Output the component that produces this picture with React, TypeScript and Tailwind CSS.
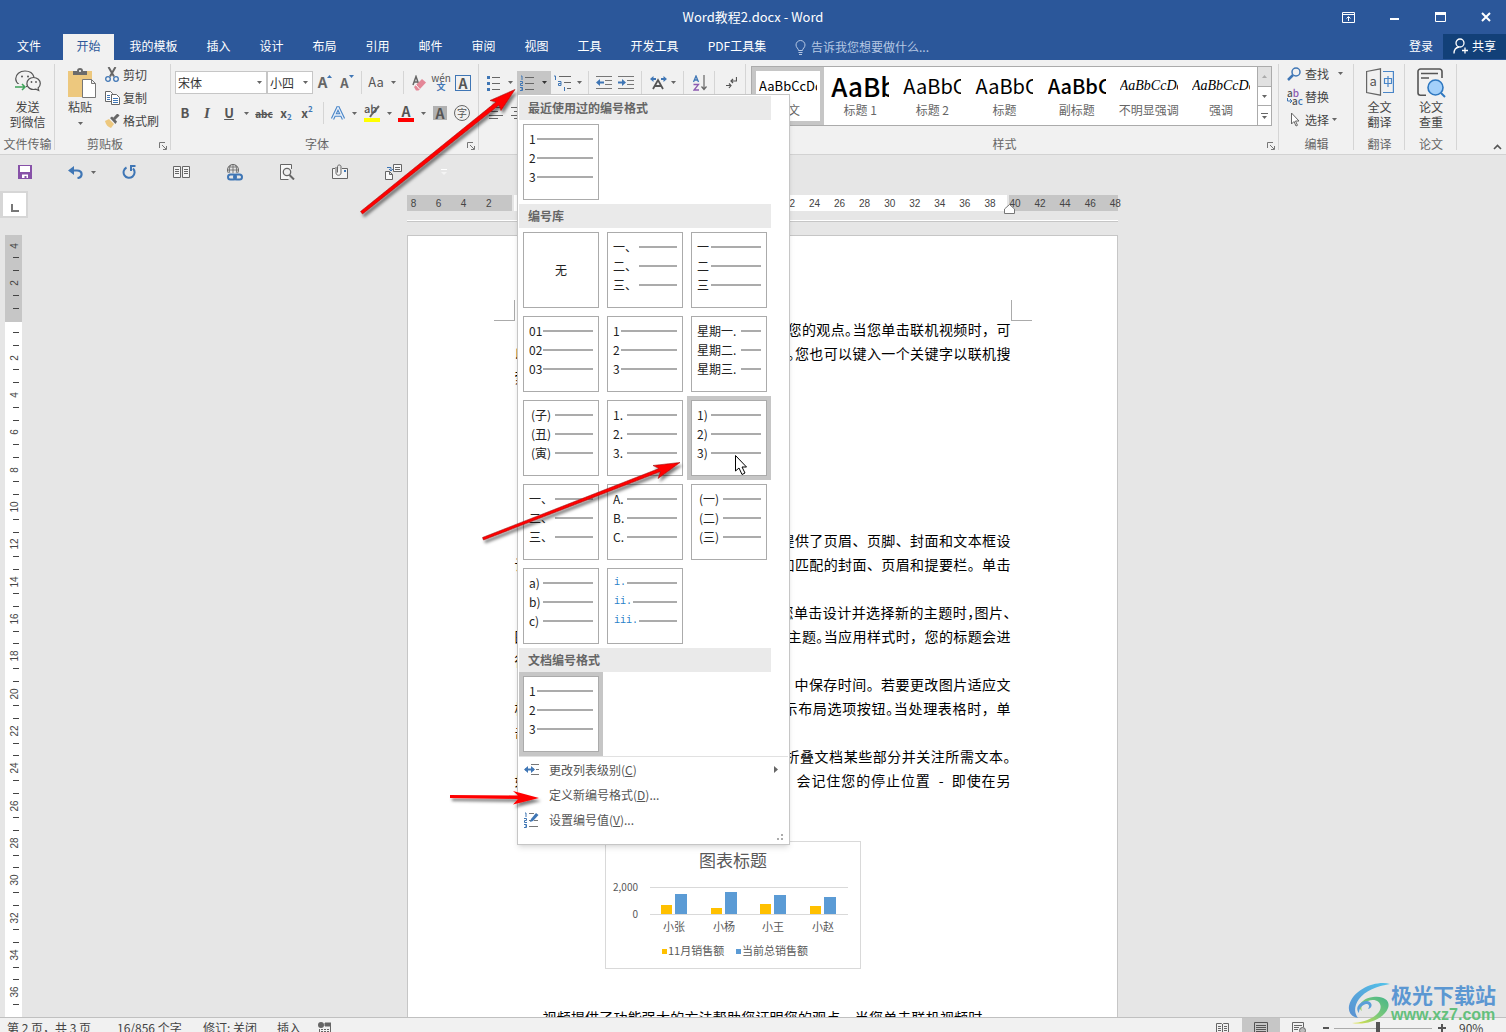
import React, { ReactNode } from 'react';

function Svg({ w, h, children, cls = '' }: { w: number; h: number; children: ReactNode; cls?: string }) {
  return (
    <svg width={w} height={h} viewBox={`0 0 ${w} ${h}`} fill="none" className={'shrink-0 ' + cls} aria-hidden="true">
      {children}
    </svg>
  );
}

function Caret({ color = '#666' }: { color?: string }) {
  return (
    <Svg w={5} h={3}>
      <path d="M0 0h5L2.5 3z" fill={color} />
    </Svg>
  );
}

function Cell({ w, label, children }: { w: string; label: string; children: ReactNode }) {
  return (
    <button aria-label={label} className={'flex h-full shrink-0 items-center justify-center ' + w}>
      {children}
    </button>
  );
}

function Sep({ w }: { w: string }) {
  return (
    <div className={'flex h-full shrink-0 justify-center ' + w}>
      <div className="h-full w-px bg-[#d5d5d5]" />
    </div>
  );
}

function Launcher() {
  return (
    <button aria-label="对话框" className="absolute right-1 bottom-1">
      <Svg w={8} h={8}>
        <path d="M.5 6V.5H6M3 3l4 4M7.5 4v3.500H4" stroke="#777" />
      </Svg>
    </button>
  );
}

function Group({ w, label, launcher, children }: { w: string; label: string; launcher?: boolean; children: ReactNode }) {
  return (
    <section className={'relative flex flex-col ' + w}>
      <div className="h-[74px]">{children}</div>
      <div className={'flex h-[19px] items-center justify-center text-xs whitespace-nowrap text-[#666] ' + (launcher ? 'pr-4' : '')}>{label}</div>
      {launcher && <Launcher />}
      <div className="absolute top-1 right-0 h-[86px] w-px bg-[#d5d5d5]" />
    </section>
  );
}

const tabs: { name: string; w: string }[] = [
  { name: '我的模板', w: 'w-[77px]' },
  { name: '插入', w: 'w-[53px]' },
  { name: '设计', w: 'w-[53px]' },
  { name: '布局', w: 'w-[53px]' },
  { name: '引用', w: 'w-[53px]' },
  { name: '邮件', w: 'w-[53px]' },
  { name: '审阅', w: 'w-[53px]' },
  { name: '视图', w: 'w-[53px]' },
  { name: '工具', w: 'w-[53px]' },
  { name: '开发工具', w: 'w-[77px]' },
  { name: 'PDF工具集', w: 'w-[88px]' },
];

function TitleBar() {
  return (
    <header className="bg-[#2b579a] text-white">
      <div className="relative flex h-[34px] items-center justify-end">
        <h1 className="absolute inset-x-0 text-center text-[13px] leading-[34px]">Word教程2.docx - Word</h1>
        <button aria-label="功能区显示选项" className="z-10 flex h-8 w-[46px] items-center justify-center">
          <Svg w={13} h={11}>
            <path d="M.5.5h12v10H.5zM.5 2.500h12M6.500 9V5M4.500 6.500l2-2 2 2" stroke="#fff" />
          </Svg>
        </button>
        <button aria-label="最小化" className="z-10 flex h-8 w-[46px] items-center justify-center">
          <Svg w={9} h={6}>
            <path d="M0 4h9v2H0z" fill="#fff" />
          </Svg>
        </button>
        <button aria-label="最大化" className="z-10 flex h-8 w-[46px] items-center justify-center">
          <Svg w={11} h={10}>
            <path d="M.5.500h10v9H.5z" stroke="#fff" />
            <path d="M0 0h11v3H0z" fill="#fff" />
          </Svg>
        </button>
        <button aria-label="关闭" className="z-10 mr-[-3px] flex h-8 w-[46px] items-center justify-center">
          <Svg w={10} h={10}>
            <path d="M1 1l8 8M9 1L1 9" stroke="#fff" strokeWidth="2" />
          </Svg>
        </button>
      </div>
      <div className="flex h-[26px] items-stretch text-xs">
        <nav className="flex whitespace-nowrap">
          <button className="w-[58px] pb-[2px]">文件</button>
          <button className="mr-px ml-[5px] w-[51px] bg-[#f1f1f1] pb-[2px] text-[#2b579a]">开始</button>
          {tabs.map((t) => (
            <button key={t.name} className={'pb-[2px] ' + t.w}>
              {t.name}
            </button>
          ))}
        </nav>
        <label className="ml-[14px] flex flex-1 items-center gap-[5px]">
          <Svg w={11} h={15}>
            <path d="M3.500 10.500c0-2-2.500-2.800-2.500-5.500a4.500 4.500 0 019 0c0 2.700-2.500 3.500-2.500 5.500zM3.500 12.500h4M4 14.500h3" stroke="#b5c7e3" />
          </Svg>
          <input aria-label="告诉我您想要做什么" placeholder="告诉我您想要做什么..." className="w-[160px] bg-transparent outline-none placeholder:text-[#b5c7e3]" />
        </label>
        <button className="w-[44px] pb-[2px] whitespace-nowrap">登录</button>
        <button className="mb-px flex w-[63px] items-center justify-center gap-1 bg-[#124078] pb-[2px] whitespace-nowrap">
          <Svg w={15} h={16}>
            <circle cx="7" cy="5" r="4" stroke="#fff" strokeWidth="1.300" />
            <path d="M1 15.500c0-3.500 2-6 5-6.500M9 12.500h6M12 9.500v6" stroke="#fff" strokeWidth="1.300" />
          </Svg>
          共享
        </button>
      </div>
    </header>
  );
}

type Row = [string, string];
const W56 = 'w-[56px]';
const W50 = 'w-[50px]';
const W44 = 'w-[44px]';
const W38 = 'w-[38px]';
const W20 = 'w-[20px]';
const plain: Row[] = [['1', W56], ['2', W56], ['3', W56]];
const library: { rows: Row[]; active?: boolean }[] = [
  { rows: [] },
  { rows: [['一、', W38], ['二、', W38], ['三、', W38]] },
  { rows: [['一', W50], ['二', W50], ['三', W50]] },
  { rows: [['01', W50], ['02', W50], ['03', W50]] },
  { rows: plain },
  { rows: [['星期一.', W20], ['星期二.', W20], ['星期三.', W20]] },
  { rows: [['(子)', W38], ['(丑)', W38], ['(寅)', W38]] },
  { rows: [['1.', W50], ['2.', W50], ['3.', W50]] },
  { rows: [['1)', W50], ['2)', W50], ['3)', W50]], active: true },
  { rows: [['一、', W38], ['二、', W38], ['三、', W38]] },
  { rows: [['A.', W50], ['B.', W50], ['C.', W50]] },
  { rows: [['(一)', W38], ['(二)', W38], ['(三)', W38]] },
  { rows: [['a)', W50], ['b)', W50], ['c)', W50]] },
  { rows: [['i.', W50], ['ii.', W44], ['iii.', W38]] },
];

function NumberBox({ rows, active }: { rows: Row[]; active?: boolean }) {
  return (
    <button className={'h-[84px] w-[84px] p-1 ' + (active ? 'bg-[#c6c6c6]' : '')}>
      <span className="flex h-full flex-col border border-[#ababab] bg-white px-[5px] pt-1 text-xs text-[#222]">
        {rows.length === 0 && <span className="m-auto pb-1">无</span>}
        {rows.map(([t, w]) => (
          <span key={t} className="flex h-[19px] items-center justify-between whitespace-nowrap">
            <span className={t[0] === 'i' ? "pl-px font-['Liberation_Mono'] text-[10px] text-[#2a7fc9]" : t[0] === '(' ? 'pl-[2px]' : ''}>{t}</span>
            <span className={'h-[2px] shrink-0 bg-[#ababab] ' + w} />
          </span>
        ))}
      </span>
    </button>
  );
}

function MenuHead({ children }: { children: ReactNode }) {
  return <h2 className="h-6 w-[252px] bg-[#eaeaea] pl-[9px] text-xs leading-6 font-bold text-[#666]">{children}</h2>;
}

function NumberingMenu() {
  return (
    <div className="absolute top-full left-0 z-20 w-[273px] border border-[#c6c6c6] bg-white p-px text-[#555] shadow-md">
      <MenuHead>最近使用过的编号格式</MenuHead>
      <div className="flex">
        <NumberBox rows={plain} />
      </div>
      <MenuHead>编号库</MenuHead>
      <div className="grid w-[252px] grid-cols-3">
        {library.map((b, i) => (
          <NumberBox key={i} {...b} />
        ))}
      </div>
      <MenuHead>文档编号格式</MenuHead>
      <div className="flex">
        <NumberBox rows={plain} active />
      </div>
      <div className="border-t border-[#e1e1e1] text-xs">
        <button className="flex h-[25px] w-full items-center gap-[10px] pr-[10px] pl-[5px]">
          <Svg w={15} h={11}>
            <path d="M1 5.500h9" stroke="#3f76b5" strokeWidth="2" />
            <path d="M0 5.500L4 2v7zM11 5.500L7 2v7z" fill="#3f76b5" />
            <path d="M7 .5h8M12 5.500h3M7 10.500h8" stroke="#777" />
          </Svg>
          <span className="flex-1 text-left">更改列表级别(<u>C</u>)</span>
          <Svg w={4} h={7}>
            <path d="M0 0l4 3.500L0 7z" fill="#666" />
          </Svg>
        </button>
        <button className="flex h-[25px] w-full items-center pl-[30px]">
          <span>定义新编号格式(<u>D</u>)...</span>
        </button>
        <button className="flex h-[25px] w-full items-center gap-[10px] pl-[5px]">
          <Svg w={15} h={16}>
            <path d="M1 1h1v4M0 6.500h2.500v2H.5v2h2.500M0 12.500h2.500v3H0M1 14h1.500" stroke="#3f76b5" />
            <path d="M5 1.500h5M5 8.500h2M10 8.500h4M5 14.500h9" stroke="#777" />
            <path d="M6 10l1-3 5-6 2.500 2-5.500 6z" fill="#3f76b5" />
          </Svg>
          <span>设置编号值(<u>V</u>)...</span>
        </button>
      </div>
      <div className="flex h-[11px] items-end justify-end pr-[3px] pb-[2px]">
        <Svg w={8} h={7}>
          <path d="M4 0h2v2H4zM4 4h2v2H4zM0 4h2v2H0z" fill="#ababab" />
        </Svg>
      </div>
    </div>
  );
}

function ClipboardGroup() {
  return (
    <Group w="w-[116px]" label="剪贴板" launcher>
      <div className="flex h-full pt-[3px] pl-[11px] text-xs text-[#444]">
        <button className="flex w-8 flex-col items-center pt-[5px] whitespace-nowrap">
          <Svg w={28} h={30}>
            <path d="M0 3h24v26H0z" fill="#edc87e" />
            <path d="M5 7V3h4c0-2 1-3 3-3s3 1 3 3h4v4z" fill="#6b6b6b" />
            <circle cx="12" cy="3" r="1" fill="#fff" />
            <path d="M14.500 11.500h9l4 4v14h-13zM23.500 11.500v4h4" fill="#fff" stroke="#777" />
          </Svg>
          <span className="pr-1 leading-[18px]">粘贴</span>
          <span className="mt-[6px] pr-1">
            <Caret />
          </span>
        </button>
        <div className="flex flex-col pl-[7px]">
          <button className="flex h-[23px] items-center gap-1 whitespace-nowrap">
            <Svg w={14} h={15}>
              <path d="M3.500 0L9 9.500M10.500 0L5 9.500" stroke="#666" strokeWidth="2" />
              <circle cx="3" cy="12" r="2.300" stroke="#3f76b5" strokeWidth="1.300" />
              <circle cx="11" cy="12" r="2.300" stroke="#3f76b5" strokeWidth="1.300" />
            </Svg>
            剪切
          </button>
          <button className="flex h-[23px] items-center gap-[3px] whitespace-nowrap">
            <Svg w={15} h={14}>
              <path d="M.5.500h5l2 2v8h-7z" fill="#fff" stroke="#666" />
              <path d="M6.500 3.500h5l3 3v7h-8z" fill="#fff" stroke="#666" />
              <path d="M2 4.500h3M2 6.500h3M2 8.500h3M8 7.500h5M8 9.500h5M8 11.500h5" stroke="#3f76b5" />
            </Svg>
            复制
          </button>
          <button className="flex h-[23px] items-center gap-[3px] whitespace-nowrap">
            <Svg w={15} h={14}>
              <path d="M0 7l4-2 5 5-3 4c-3-1-5-3-6-7z" fill="#edc87e" />
              <path d="M5 4l2-1.500 5 5L10.500 10z" fill="#666" />
              <path d="M9 5l4.500-4.500" stroke="#666" strokeWidth="3" />
            </Svg>
            格式刷
          </button>
        </div>
      </div>
    </Group>
  );
}

function Combo({ w, value, label }: { w: string; value: string; label: string }) {
  return (
    <div className={'relative h-full shrink-0 ' + w}>
      <select aria-label={label} className="block h-full w-full appearance-none border border-[#c6c6c6] bg-white pl-[2px] text-xs text-[#333]">
        <option>{value}</option>
      </select>
      <span className="pointer-events-none absolute inset-y-0 right-[5px] flex items-center">
        <Caret />
      </span>
    </div>
  );
}

function FontGroup() {
  return (
    <Group w="w-[308px]" label="字体" launcher>
      <div className="flex flex-col gap-2 pt-[11px] text-[#555]">
        <div className="flex h-[23px] pl-1">
          <Combo w="w-[92px]" value="宋体" label="字体" />
          <Combo w="w-[46px]" value="小四" label="字号" />
          <Cell w="w-6" label="增大字号">
            <span className="text-[15px] font-bold text-[#666]">A</span>
            <Svg w={5} h={3} cls="mb-[12px]"><path d="M0 3h5L2.500 0z" fill="#3f76b5" /></Svg>
          </Cell>
          <Cell w="w-5" label="减小字号">
            <span className="pt-px text-[13px] font-bold text-[#666]">A</span>
            <Svg w={5} h={3} cls="mb-[12px]"><path d="M0 0h5L2.500 3z" fill="#3f76b5" /></Svg>
          </Cell>
          <Sep w="w-2" />
          <Cell w="w-[22px]" label="更改大小写"><span className="pb-[2px] text-[13px]">Aa</span></Cell>
          <Cell w="w-3" label="更改大小写选项"><Caret /></Cell>
          <Sep w="w-2" />
          <Cell w="w-6" label="清除格式">
            <Svg w={15} h={16}>
              <path d="M1 10L4 1.500 7 10M2 7h4" stroke="#666" strokeWidth="1.500" />
              <path d="M2 12l8-8 4 3.500-7.500 8H4z" fill="#e48797" />
              <path d="M4 10l3.500 4" stroke="#fff" />
            </Svg>
          </Cell>
          <Cell w="w-5" label="拼音指南">
            <span className="flex flex-col items-center">
              <span className="text-[10px] leading-[9px]">wén</span>
              <span className="text-[9px] leading-[10px] font-bold text-[#3f76b5]">文</span>
            </span>
          </Cell>
          <Cell w="w-6" label="字符边框">
            <span className="h-4 w-4 border border-[#3f76b5] text-center text-sm leading-[14px] font-bold">A</span>
          </Cell>
        </div>
        <div className="flex h-[22px] pl-[3px]">
          <Cell w="w-[22px]" label="加粗"><b className="text-[13px]">B</b></Cell>
          <Cell w="w-[22px]" label="倾斜"><i className="font-['Liberation_Serif'] text-[15px] font-bold">I</i></Cell>
          <Cell w="w-[22px]" label="下划线"><b className="text-[13px] underline">U</b></Cell>
          <Cell w="w-3" label="下划线选项"><Caret /></Cell>
          <Cell w="w-6" label="删除线"><s className="text-[10px] font-bold">abc</s></Cell>
          <Cell w="w-5" label="下标"><b className="text-xs">x</b><span className="pt-2 text-[8px] font-bold text-[#3f76b5]">2</span></Cell>
          <Cell w="w-[22px]" label="上标"><b className="text-xs">x</b><span className="pb-2 text-[8px] font-bold text-[#3f76b5]">2</span></Cell>
          <Sep w="w-[10px]" />
          <Cell w="w-5" label="文本效果">
            <Svg w={14} h={14}>
              <path d="M1.500 13L7 1.500 12.500 13M3.500 9h7" stroke="#4a86c8" strokeWidth="3.500" />
              <path d="M1.500 13L7 1.500 12.500 13M3.500 9h7" stroke="#e8f0fa" strokeWidth="1.300" />
            </Svg>
          </Cell>
          <Cell w="w-3" label="文本效果选项"><Caret /></Cell>
          <Cell w="w-6" label="突出显示">
            <span className="relative flex h-[17px] w-4 flex-col justify-end">
              <span className="absolute -top-1 left-0 text-[11px] leading-[15px] font-medium">ab</span>
              <Svg w={16} h={17}>
                <path d="M15 1L8 9l-2 3" stroke="#666" strokeWidth="2" />
                <path d="M0 13h16v4H0z" fill="#ff0" />
              </Svg>
            </span>
          </Cell>
          <Cell w="w-[10px]" label="突出显示选项"><Caret /></Cell>
          <Cell w="w-6" label="字体颜色">
            <span className="flex w-4 flex-col items-center">
              <b className="text-sm leading-[13px]">A</b>
              <span className="h-1 w-4 bg-[#f00]" />
            </span>
          </Cell>
          <Cell w="w-[10px]" label="字体颜色选项"><Caret /></Cell>
          <Cell w="w-6" label="字符底纹"><b className="h-[14px] w-[14px] bg-[#b1b1b1] text-sm leading-[14px]">A</b></Cell>
          <Cell w="w-5" label="带圈字符"><span className="h-4 w-4 rounded-full border border-[#666] text-[10px] leading-[14px]">字</span></Cell>
        </div>
      </div>
    </Group>
  );
}

function ParagraphGroup() {
  return (
    <Group w="w-[267px]" label="段落">
      <div className="flex flex-col gap-2 pt-[11px]">
        <div className="flex h-[23px] pl-[5px]">
          <Cell w="w-5" label="项目符号">
            <Svg w={14} h={16}>
              <path d="M0 1h3v3H0zM0 7h3v3H0zM0 13h3v3H0z" fill="#3f76b5" />
              <path d="M5 2.500h8M5 8.500h8M5 14.500h8" stroke="#666" />
            </Svg>
          </Cell>
          <Cell w="w-[13px]" label="项目符号选项"><Caret /></Cell>
          <div className="relative flex h-full w-[34px] shrink-0 bg-[#c6c6c6]">
            <Cell w="w-[21px]" label="编号">
              <Svg w={15} h={16}>
                <path d="M1 1h1v4M0 6.500h2.500v2H.5v2h2.500M0 12.500h2.500v3H0M1 14h1.500" stroke="#3f76b5" />
                <path d="M5 2.500h9M5 8.500h9M5 14.500h9" stroke="#666" />
              </Svg>
            </Cell>
            <Cell w="w-[13px]" label="编号选项"><Caret color="#333" /></Cell>
            <NumberingMenu />
          </div>
          <Cell w="w-[22px]" label="多级列表">
            <Svg w={17} h={16}>
              <path d="M0 1h1.500v4M4 6.500h3v4H4.500v-2H7M10.500 12v4" stroke="#3f76b5" />
              <path d="M5 1.500h12M10 7.500h7M13 13.500h4" stroke="#666" />
            </Svg>
          </Cell>
          <Cell w="w-3" label="多级列表选项"><Caret /></Cell>
          <Sep w="w-[7px]" />
          <Cell w="w-6" label="减少缩进量">
            <Svg w={16} h={15}>
              <path d="M0 1.500h16M9 5.500h7M9 9.500h7M0 13.500h16" stroke="#777" />
              <path d="M0 7.500L4 4v2.500h4v2H4V11z" fill="#3f76b5" />
            </Svg>
          </Cell>
          <Cell w="w-5" label="增加缩进量">
            <Svg w={16} h={15}>
              <path d="M0 1.500h16M9 5.500h7M9 9.500h7M0 13.500h16" stroke="#777" />
              <path d="M8 7.500L4 4v2.500H0v2h4V11z" fill="#3f76b5" />
            </Svg>
          </Cell>
          <Sep w="w-[10px]" />
          <Cell w="w-6" label="中文版式">
            <Svg w={17} h={14}>
              <path d="M3 13l5-9 5 9M5 10h6.500" stroke="#555" strokeWidth="1.800" />
              <path d="M0 3l3.500-3v2H6v2H3.500v2zM17 3l-3.500-3v2H11v2h2.500v2z" fill="#3f76b5" />
            </Svg>
          </Cell>
          <Cell w="w-[6px]" label="中文版式选项"><Caret /></Cell>
          <Sep w="w-[14px]" />
          <Cell w="w-5" label="排序">
            <Svg w={14} h={16}>
              <path d="M.5 7L3 1l2.500 6M1.500 5h3" stroke="#3f76b5" strokeWidth="1.300" />
              <path d="M.5 9.500h5L1 15h5" stroke="#8d5bb0" strokeWidth="1.300" />
              <path d="M11 0v14M8.500 11.500L11 14.500l2.500-3" stroke="#666" strokeWidth="1.200" />
            </Svg>
          </Cell>
          <Sep w="w-2" />
          <Cell w="w-[26px]" label="显示编辑标记">
            <Svg w={11} h={13}>
              <path d="M10.500 1v4H5M7 3L5 5l2 2M0 9.500h5M3 7.500l2 2-2 2.500" stroke="#555" strokeWidth="1.200" />
            </Svg>
          </Cell>
        </div>
        <div className="flex h-[22px] pl-[5px]">
          <Cell w="w-6" label="左对齐">
            <Svg w={15} h={14}><path d="M0 1.500h14M0 5.500h9M0 9.500h14M0 12.500h9" stroke="#666" /></Svg>
          </Cell>
          <Cell w="w-5" label="居中">
            <Svg w={15} h={14}><path d="M0 1.500h14M3 5.500h8M0 9.500h14M3 12.500h8" stroke="#666" /></Svg>
          </Cell>
        </div>
      </div>
    </Group>
  );
}

const styleItems: { sample: string; name: string; cls: string }[] = [
  { sample: 'AaBbCcDd', name: '正文', cls: 'text-[13px]' },
  { sample: 'AaBb', name: '标题 1', cls: 'text-[26px] font-medium' },
  { sample: 'AaBbCc', name: '标题 2', cls: 'text-xl' },
  { sample: 'AaBbCc', name: '标题', cls: 'text-xl' },
  { sample: 'AaBbCc', name: '副标题', cls: 'text-xl font-medium' },
  { sample: 'AaBbCcDd', name: '不明显强调', cls: "font-['Liberation_Serif'] text-sm text-[#555] italic" },
  { sample: 'AaBbCcDd', name: '强调', cls: "font-['Liberation_Serif'] text-sm italic" },
];

function StylesGroup() {
  return (
    <Group w="min-w-0 flex-1" label="样式" launcher>
      <div className="pt-[6px] pr-[7px] pl-[5px]">
        <div className="flex h-[60px] border border-[#ababab] bg-white">
          <div className="flex min-w-0 flex-1 overflow-hidden">
            {styleItems.map((s, i) => (
              <button key={s.name} className={'flex h-full min-w-0 flex-1 flex-col items-center border-4 ' + (i === 0 ? 'border-[#c6c6c6]' : 'border-transparent')}>
                <span className={'h-[30px] w-[58px] overflow-hidden text-left leading-[30px] whitespace-nowrap text-black ' + s.cls}>{s.sample}</span>
                <span className="text-xs leading-[18px] whitespace-nowrap text-[#666]">{s.name}</span>
              </button>
            ))}
          </div>
          <div className="flex w-[14px] flex-col divide-y divide-[#ababab] border-l border-[#ababab]">
            <button aria-label="上一行" className="flex flex-1 items-center justify-center bg-[#e1e1e1]">
              <Svg w={5} h={3}><path d="M0 3h5L2.500 0z" fill="#ababab" /></Svg>
            </button>
            <button aria-label="下一行" className="flex flex-1 items-center justify-center"><Caret /></button>
            <button aria-label="其他" className="flex flex-1 flex-col items-center justify-center gap-[2px]">
              <span className="h-px w-[7px] bg-[#666]" />
              <Caret />
            </button>
          </div>
        </div>
      </div>
    </Group>
  );
}

function Ribbon() {
  return (
    <div className="flex h-[95px] border-b border-[#d2d2d2] bg-[#f1f1f1]">
      <Group w="w-[55px]" label="文件传输">
        <button className="flex w-full flex-col items-center pt-[10px] text-xs leading-[15px] text-[#444]">
          <Svg w={26} h={23} cls="mb-[6px]">
            <path d="M4 14.500C2 13 .7 11 .7 8.800.7 4.500 4.800 1 10 1c4.500 0 8 2.500 9 6M12 16.500c-1.500.2-3.500.2-5-.3l-3 2" stroke="#555" strokeWidth="1.200" />
            <path d="M18.500 7.500c3.800 0 6.800 2.600 6.800 6 0 1.800-.8 3.200-2.200 4.500l.6 2.500-2.800-1.300c-4.800 1.200-9-1.500-9-5.700 0-3.400 2.800-6 6.600-6z" stroke="#555" strokeWidth="1.200" />
            <path d="M0 14h11v6H0z" fill="#f1f1f1" />
            <circle cx="7" cy="6.500" r="1" fill="#555" /><circle cx="13" cy="6.500" r="1" fill="#555" />
            <circle cx="16.500" cy="12" r=".9" fill="#555" /><circle cx="21" cy="12" r=".9" fill="#555" />
            <path d="M0 17h9.500M7 14l3 3-3 3" stroke="#3fa35a" strokeWidth="1.500" />
          </Svg>
          <span>发送</span>
          <span>到微信</span>
        </button>
      </Group>
      <ClipboardGroup />
      <FontGroup />
      <ParagraphGroup />
      <StylesGroup />
      <Group w="w-[75px]" label="编辑">
        <div className="flex flex-col pt-[2px] pl-2 text-xs text-[#444]">
          <button className="flex h-[23px] items-center gap-[3px] whitespace-nowrap">
            <Svg w={15} h={14}>
              <circle cx="9" cy="5" r="4" stroke="#3f76b5" strokeWidth="1.500" />
              <path d="M6 8l-5 5" stroke="#3f76b5" strokeWidth="2.500" />
            </Svg>
            查找
            <span className="ml-[6px]"><Caret /></span>
          </button>
          <button className="flex h-[23px] items-center gap-[2px] whitespace-nowrap">
            <span className="flex w-4 flex-col text-[10px] leading-[8px] font-medium">
              <span className="text-left text-[#555]">a<span className="text-[#8d5bb0]">b</span></span>
              <span className="flex items-center justify-end text-[#555]">
                <Svg w={5} h={5}><path d="M.5 0v3h4M3 1l2 2-2 2" stroke="#3f76b5" /></Svg>a<span className="text-[#3f76b5]">c</span>
              </span>
            </span>
            替换
          </button>
          <button className="flex h-[23px] items-center gap-[3px] whitespace-nowrap">
            <Svg w={15} h={15}><path d="M4.500 1v11l2.500-2.500 2 4.500 1.500-.7-2-4.300h3.500z" fill="#fff" stroke="#666" /></Svg>
            选择
            <Caret />
          </button>
        </div>
      </Group>
      <Group w="w-[51px]" label="翻译">
        <button className="flex w-full flex-col items-center pt-2 text-xs leading-[15px] text-[#444]">
          <Svg w={28} h={28} cls="mb-[3px]">
            <path d="M.6 3.500L14.500.8v26.400L.6 24.500z" stroke="#666" strokeWidth="1.200" />
            <path d="M17 3.500h10.400v21H17" stroke="#4a86c8" strokeWidth="1.200" />
            <text x="3.500" y="18" fontSize="13" fill="#555">a</text>
            <path d="M18.500 10.500h7v5h-7zM22 8v11" stroke="#4a86c8" strokeWidth="1.200" />
          </Svg>
          <span>全文</span>
          <span>翻译</span>
        </button>
      </Group>
      <Group w="w-[52px]" label="论文">
        <button className="flex w-full flex-col items-center pt-2 text-xs leading-[15px] text-[#444]">
          <Svg w={29} h={30} cls="mb-px">
            <path d="M9 27.200H3.500A2.500 2.500 0 011 24.700V3.500A2.500 2.500 0 013.500 1h19A2.500 2.500 0 0125 3.500V10" stroke="#555" strokeWidth="1.600" />
            <path d="M4 5.500h17M4 10h8" stroke="#555" strokeWidth="1.600" />
            <circle cx="18.500" cy="19.500" r="7.500" fill="#a3d0fa" stroke="#2f78c0" strokeWidth="1.600" />
            <path d="M24 25l4 4" stroke="#2f78c0" strokeWidth="2" />
          </Svg>
          <span>论文</span>
          <span>查重</span>
        </button>
      </Group>
      <div className="flex w-[49px] items-end justify-end pr-1 pb-1">
        <button aria-label="折叠功能区">
          <Svg w={9} h={6}><path d="M1 5l3.500-3.500L8 5" stroke="#555" strokeWidth="1.600" /></Svg>
        </button>
      </div>
    </div>
  );
}

function QuickBar() {
  return (
    <div className="flex h-[35px] items-center bg-[#e6e6e6] pb-px">
      <Cell w="w-[50px]" label="保存">
        <Svg w={14} h={14}>
          <path d="M0 0h14v14H0z" fill="#8751a8" />
          <path d="M2 1h10v6H2zM4 9.500h6V13H8.500v-2h-2v2H4z" fill="#fff" />
        </Svg>
      </Cell>
      <Cell w="w-[52px] pl-[11px]" label="撤消">
        <Svg w={15} h={13} cls="mr-2">
          <path d="M2 4.500h7c6 0 6 7 .5 7.500" stroke="#3f76b5" strokeWidth="2.200" />
          <path d="M0 4.500L6 0v9z" fill="#3f76b5" />
        </Svg>
        <Caret />
      </Cell>
      <Cell w="w-[53px]" label="重复">
        <Svg w={14} h={14}>
          <path d="M4.500 2.500A5.500 5.500 0 1011 3.500" stroke="#3f76b5" strokeWidth="2" />
          <path d="M8 0h5.500v2H10v4H8z" fill="#3f76b5" />
        </Svg>
      </Cell>
      <Cell w="w-[53px]" label="阅读">
        <Svg w={17} h={12}>
          <path d="M.5.500h7v11h-7zM9.500.500h7v11h-7z" fill="#f4f4f4" stroke="#666" />
          <path d="M2 3.500h4M2 5.500h4M2 7.500h4M11 3.500h4M11 5.500h4M11 7.500h4" stroke="#666" />
        </Svg>
      </Cell>
      <Cell w="w-[53px]" label="超链接">
        <Svg w={17} h={17}>
          <circle cx="7" cy="6" r="5.500" stroke="#666" />
          <path d="M7 .5v11M1.500 6h11M2.500 3h9M4.500 1c-1.500 3-1.500 7 0 10M9.500 1c1.500 3 1.500 7 0 10" stroke="#666" strokeWidth=".8" />
          <path d="M1 9h16v8H1z" fill="#e6e6e6" />
          <rect x="2" y="10.500" width="8" height="5" rx="2.500" stroke="#3f76b5" strokeWidth="2" />
          <rect x="8" y="10.500" width="8" height="5" rx="2.500" stroke="#3f76b5" strokeWidth="2" />
        </Svg>
      </Cell>
      <Cell w="w-[53px]" label="打印预览">
        <Svg w={15} h={16}>
          <path d="M11.500 5V.500H.5v15h8" fill="#f8f8f8" stroke="#666" />
          <circle cx="7" cy="8" r="3.700" fill="#eee" stroke="#666" strokeWidth="1.300" />
          <path d="M9.500 11l4.500 4.500" stroke="#666" strokeWidth="2" />
        </Svg>
      </Cell>
      <Cell w="w-[53px]" label="附件">
        <Svg w={17} h={16}>
          <path d="M3 4.500H.5v10h15v-10H10" fill="#f4f4f4" stroke="#666" />
          <path d="M4 3v6c0 3 5 3 5 0V2.500c0-2-3.500-2-3.500 0v6" stroke="#666" />
          <path d="M12 6h2v2h-2z" fill="#3f76b5" />
        </Svg>
      </Cell>
      <Cell w="w-[53px]" label="切换">
        <Svg w={17} h={16}>
          <path d="M8.500.500h8v7h-8zM.5 7.500h4l3 3v5h-7zM4.500 7.500v3h3" fill="#f8f8f8" stroke="#666" />
          <path d="M10 3.500h5M10 5.500h5" stroke="#666" />
          <path d="M2 3.500h4v3M4 5l2 2 2-2" stroke="#3f76b5" />
        </Svg>
      </Cell>
      <Cell w="w-12" label="自定义快速访问工具栏">
        <Svg w={6} h={6}><path d="M0 .5h6" stroke="#fff" /><path d="M0 3h6L3 6z" fill="#f4f4f4" /></Svg>
      </Cell>
    </div>
  );
}

const hNumbers = [8, 6, 4, 2, 0, ...Array.from({ length: 24 }, (_, i) => (i + 1) * 2)];
const hiddenByMenu = (n: number, i: number) => i > 4 && n < 22;
const vNumbers = [4, 2, 0, ...Array.from({ length: 18 }, (_, i) => (i + 1) * 2)];

function HorizontalRuler() {
  return (
    <div className="flex h-[45px] bg-[#e6e6e6]">
      <div className="w-[35px] shrink-0">
        <button aria-label="制表符" className="h-[27px] w-7 border-2 border-l-[3px] border-[#d6d6d6] bg-white p-[7px]">
          <span className="mt-1 ml-px block h-2 w-2 border-b-2 border-l-2 border-[#777]" />
        </button>
      </div>
      <div className="flex flex-1 justify-center pr-[17px]">
        <div className="w-[711px]">
          <div className="relative mt-[5px] grid h-4 font-['Liberation_Sans'] text-[10px] text-[#444]">
            <div className="flex gap-[2px] [grid-area:1/1]">
              <div className="w-[105px] bg-[#c6c6c6]" />
              <div className="flex-1 bg-white" />
              <div className="w-[109px] bg-[#c6c6c6]" />
            </div>
            <div className="flex items-center justify-between pr-[2px] pl-[7px] [grid-area:1/1]">
              {hNumbers.map((n, i) => (
                <span key={i} className="flex w-0 justify-center">{n === 0 || hiddenByMenu(n, i) ? '' : n}</span>
              ))}
            </div>
            <Svg w={11} h={10} cls="absolute right-[103px] -bottom-[3px]">
              <path d="M.5 9.500V5l5-4.500 5 4.500v4.500z" fill="#fff" stroke="#777" />
            </Svg>
          </div>
          <div className="mt-[9px] h-[2px] border-b border-[#c6c6c6] bg-white" />
        </div>
      </div>
    </div>
  );
}

function VerticalRuler() {
  return (
    <div className="w-[35px] shrink-0 overflow-hidden pl-[5px]">
      <div className="relative grid h-full w-[17px] bg-white">
        <div className="h-[87px] bg-[#c6c6c6] [grid-area:1/1]" />
        <div className="z-10 -mt-2 flex h-[784px] flex-col font-['Liberation_Sans'] text-[10px] text-[#444] [grid-area:1/1]">
          {vNumbers.map((n, i) => (
            <div key={i} className="flex flex-1 flex-col items-center justify-around">
              <span className={'ml-1 h-px w-[6px] ' + (i === 0 ? '' : 'bg-[#444]')} />
              <span className="ml-px flex h-0 w-0 -rotate-90 items-center justify-center">{n === 0 ? '' : n}</span>
              <span className="ml-1 h-px w-[6px] bg-[#444]" />
            </div>
          ))}
        </div>
      </div>
    </div>
  );
}

type DocLine = { head?: string; tail?: string; w?: string };
const blockA: DocLine[] = [
  { tail: '您的观点。当您单击联机视频时，可', w: 'w-[223px]' },
  { head: '以', tail: '。您也可以键入一个关键字以联机搜', w: 'w-[223px]' },
  { head: '索' },
];
const blockB: DocLine[] = [
  { tail: '提供了页眉、页脚、封面和文本框设', w: 'w-[230px]' },
  { head: '计', tail: '加匹配的封面、页眉和提要栏。单击', w: 'w-[230px]' },
  {},
  { tail: '您单击设计并选择新的主题时，图片、', w: 'w-[231px]' },
  { head: '图', tail: '主题。当应用样式时，您的标题会进', w: 'w-[223px]' },
  { head: '行' },
  { tail: '中保存时间。若要更改图片适应文', w: 'w-[216px]' },
  { head: '档', tail: '示布局选项按钮。当处理表格时，单', w: 'w-[227px]' },
  { head: '击' },
  { tail: '折叠文档某些部分并关注所需文本。', w: 'w-[225px]' },
  { head: '如', tail: '会记住您的停止位置\u00a0\u00a0-\u00a0\u00a0即使在另', w: 'w-[214px]' },
  {},
];
const tight = /^(。|主题。|您的观点。|示布局选项按钮。|您单击设计并选择新的主题时，图片、|折叠文档某些部分并关注所需文本。)/;

function TailText({ text }: { text: string }) {
  const m = text.match(tight);
  if (!m) return <>{text}</>;
  return (
    <>
      <span className="[font-feature-settings:'halt']">{m[0]}</span>
      {text.slice(m[0].length)}
    </>
  );
}

function Block({ lines }: { lines: DocLine[] }) {
  return (
    <div className="text-sm leading-6 text-black">
      {lines.map((l, i) => (
        <p key={i} className="flex h-6 justify-between">
          <span>{l.head}</span>
          {l.tail && (
            <span className={'text-justify [text-align-last:justify] ' + l.w}>
              <TailText text={l.tail} />
            </span>
          )}
        </p>
      ))}
    </div>
  );
}

const bars = [
  { name: '小张', x: 56, a: 9, b: 20 },
  { name: '小杨', x: 106, a: 6, b: 22 },
  { name: '小王', x: 155, a: 10, b: 19 },
  { name: '小赵', x: 205, a: 8, b: 17 },
];

function Chart() {
  return (
    <svg width="256" height="128" viewBox="0 0 256 128" className="mt-[25px] ml-[90px]" fill="#595959">
      <rect x=".5" y=".5" width="255" height="127" fill="#fff" stroke="#d9d9d9" />
      <text x="128" y="26" fontSize="17" textAnchor="middle">图表标题</text>
      <path d="M45 46.500h198M45 73.500h198" stroke="#d9d9d9" />
      <text x="33" y="50" fontSize="10" textAnchor="end">2,000</text>
      <text x="33" y="77" fontSize="10" textAnchor="end">0</text>
      {bars.map((b) => (
        <g key={b.name}>
          <rect x={b.x} y={73 - b.a} width="11" height={b.a} fill="#ffc000" />
          <rect x={b.x + 14} y={73 - b.b} width="12" height={b.b} fill="#5b9bd5" />
          <text x={b.x + 13} y="90" fontSize="11" textAnchor="middle">{b.name}</text>
        </g>
      ))}
      <rect x="57" y="108" width="5" height="5" fill="#ffc000" />
      <text x="63" y="114" fontSize="11">11月销售额</text>
      <rect x="131" y="108" width="5" height="5" fill="#5b9bd5" />
      <text x="137" y="114" fontSize="11">当前总销售额</text>
    </svg>
  );
}

function DocumentArea() {
  return (
    <main className="flex min-h-0 flex-1 overflow-hidden bg-[#e6e6e6]">
      <VerticalRuler />
      <div className="flex flex-1 justify-center pr-[17px]">
        <article className="relative w-[711px] shrink-0 border border-b-0 border-[#c6c6c6] bg-white pt-[81px] pr-[106px] pl-[107px]">
          <span className="absolute top-16 left-[86px] h-[21px] w-[21px] border-r border-b border-[#ababab]" />
          <span className="absolute top-16 right-[85px] h-[21px] w-[21px] border-b border-l border-[#ababab]" />
          <Block lines={blockA} />
          <div className="h-[139px]" />
          <Block lines={blockB} />
          <Chart />
          <p className="mt-9 ml-7 h-6 w-[454px] text-justify text-sm leading-6 text-black [text-align-last:justify]">视频提供了功能强大的方法帮助您证明您的观点。当您单击联机视频时，</p>
        </article>
      </div>
    </main>
  );
}

function StatusBar() {
  return (
    <footer className="flex h-[15px] shrink-0 border-t border-[#c0c0c0] bg-[#f1f1f1] text-xs text-[#444]">
      <div className="flex h-5 flex-1 items-center pl-[7px] whitespace-nowrap">
        <span className="w-[110px]">第 2 页，共 3 页</span>
        <span className="w-[86px]">16/856 个字</span>
        <span className="w-[74px]">修订: 关闭</span>
        <span className="w-[41px]">插入</span>
        <Svg w={13} h={12}>
          <circle cx="3" cy="3" r="3" fill="#666" />
          <path d="M7 1h6v3H7zM1.500 7v5M12.500 3v9" fill="#666" stroke="#666" />
          <path d="M3 7.500h8M3 9.500h8M3 11.500h8" stroke="#666" strokeDasharray="2 1" />
        </Svg>
      </div>
      <div className="flex h-5 shrink-0 items-center whitespace-nowrap">
        <Cell w="w-[39px]" label="阅读视图">
          <Svg w={13} h={12}><path d="M.5 1.500h5l1 1 1-1h5v9h-5l-1 1-1-1h-5zM6.500 2v9M2 4.500h3M2 6.500h3M2 8.500h3M8 4.500h3M8 6.500h3M8 8.500h3" stroke="#666" /></Svg>
        </Cell>
        <button aria-label="页面视图" className="flex h-full w-[38px] items-center justify-center bg-[#c6c6c6]">
          <Svg w={14} h={12}><path d="M.5.500h13v11H.5zM2 3.500h10M2 5.500h10M2 7.500h10M2 9.500h10" stroke="#555" /></Svg>
        </button>
        <Cell w="w-[38px]" label="Web 版式视图">
          <Svg w={14} h={12}>
            <path d="M6 11.500H.5V.500h11V5M2 3.500h8M2 5.500h5M2 7.500h4" stroke="#666" />
            <circle cx="10.500" cy="8.500" r="3" fill="#bbb" stroke="#666" />
          </Svg>
        </Cell>
        <Cell w="w-4" label="缩小"><span className="h-[2px] w-[6px] bg-[#555]" /></Cell>
        <input
          type="range"
          min="10"
          max="200"
          defaultValue="94"
          aria-label="显示比例"
          className="h-4 w-[98px] appearance-none bg-[linear-gradient(#ababab,#ababab)] bg-[length:100%_1px] bg-center bg-no-repeat [&::-webkit-slider-thumb]:h-3 [&::-webkit-slider-thumb]:w-1 [&::-webkit-slider-thumb]:appearance-none [&::-webkit-slider-thumb]:bg-[#555]"
        />
        <Cell w="w-5" label="放大">
          <Svg w={8} h={8}><path d="M0 4h8M4 0v8" stroke="#555" strokeWidth="2" /></Svg>
        </Cell>
        <button className="ml-[7px] w-[47px] text-left text-xs">90%</button>
      </div>
    </footer>
  );
}

function Watermark() {
  return (
    <div className="pointer-events-none absolute right-[10px] bottom-2 z-30 flex">
      <svg width="44" height="42" viewBox="0 0 42 42" aria-hidden="true">
        <defs>
          <linearGradient id="swirlBlue" x1="0" y1="1" x2="1" y2="0">
            <stop offset="0" stopColor="#5a8fd0" />
            <stop offset="1" stopColor="#52c3ea" />
          </linearGradient>
          <linearGradient id="swirlGreen" x1="0" y1="1" x2="1" y2="0">
            <stop offset="0" stopColor="#e6e44a" />
            <stop offset=".5" stopColor="#7cc979" />
            <stop offset="1" stopColor="#45b58a" />
          </linearGradient>
        </defs>
        <path d="M42 2C30-2 5 6 1 24c-1 7 3 11 9 12C6 31 6 24 11 17 17 9 29 4 42 2z" fill="url(#swirlBlue)" />
        <path d="M14 29c-6-4 0-13 11-14 14-2 20 7 12 16-7 8-20 12-33 10 12 0 25-6 28-13 3-8-5-12-12-9-5 2-8 6-6 10z" fill="url(#swirlGreen)" />
        <path d="M11 31c-5-6 2-12 8-12 6 1 6 7 1 8 2-3 1-5-2-5-4 1-7 4-7 9z" fill="#5a9fd8" />
      </svg>
      <div className="flex flex-col">
        <span className="text-[21px] leading-6 font-bold whitespace-nowrap text-[#5b97d2]">极光下载站</span>
        <span className="font-['Liberation_Sans'] text-base leading-[18px] font-bold text-[#63c07c]">www.xz7.com</span>
      </div>
    </div>
  );
}

function Annotations() {
  return (
    <svg className="pointer-events-none absolute top-0 left-0 z-30 h-[1032px] w-[1506px]" viewBox="0 0 1506 1032" aria-hidden="true">
      <defs>
        <filter id="soft" x="-20%" y="-50%" width="140%" height="220%">
          <feDropShadow dx="2" dy="3" stdDeviation="1.500" floodColor="#000" floodOpacity=".5" />
        </filter>
      </defs>
      <g fill="#f00" stroke="#a01010" strokeWidth=".6">
        <path filter="url(#soft)" d="M360.500 211.500L496 102l-6-1.500 25-11-14 21-2-5.500L362.500 214z" />
        <path filter="url(#soft)" d="M482.500 537.500L659 468.500l-6-3 27-3-22 16 2.500-7L483.500 540z" />
        <path filter="url(#soft)" stroke="none" d="M450 795l68 .5-5-4.500 26 7-26 6.500 5-5.500-68-1z" />
      </g>
      <path d="M735.500 455.500v15.500l3.500-3 3 6.500 3-1.500-3-6h4.500z" fill="#fff" stroke="#000" />
    </svg>
  );
}

export default function App() {
  return (
    <div className="relative flex h-screen flex-col overflow-hidden bg-[#e6e6e6] font-['Noto_Sans_CJK_SC','Noto_Sans',sans-serif]">
      <TitleBar />
      <Ribbon />
      <QuickBar />
      <HorizontalRuler />
      <DocumentArea />
      <StatusBar />
      <Watermark />
      <Annotations />
    </div>
  );
}
